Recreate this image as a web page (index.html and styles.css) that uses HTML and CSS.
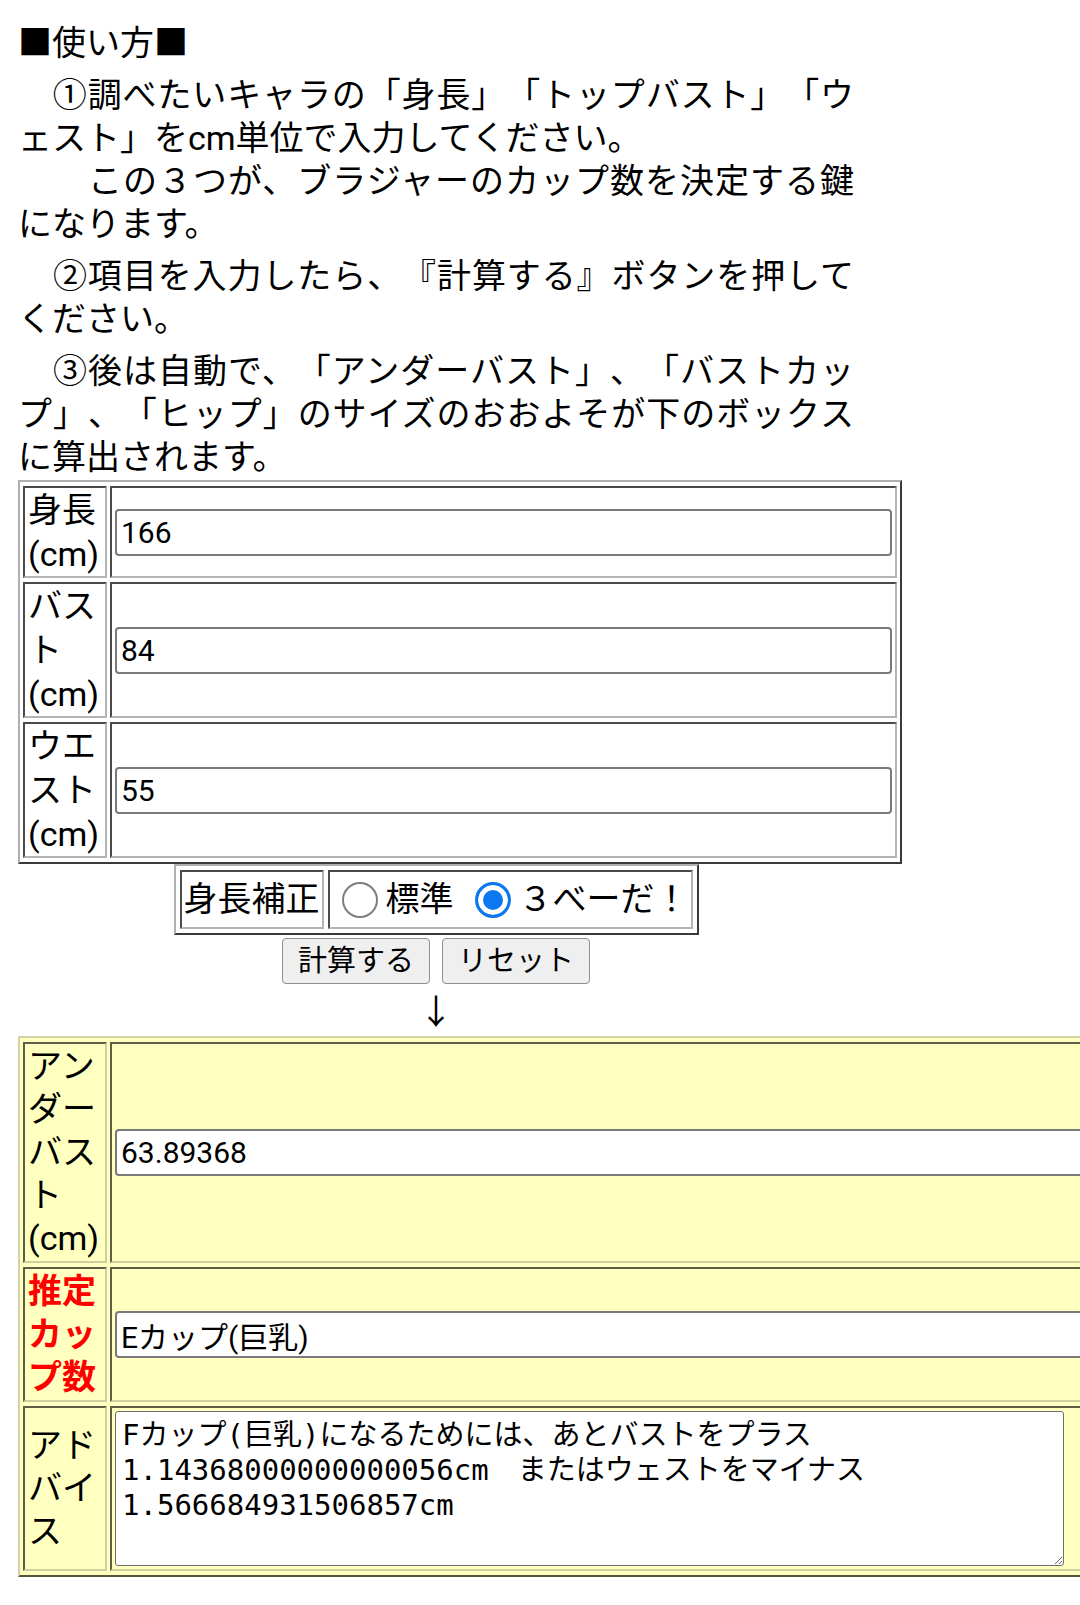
FILE: index.html
```html
<!DOCTYPE html>
<html lang="ja">
<head>
  <meta charset="UTF-8" />
  <meta name="viewport" content="width=device-width, initial-scale=1.0"/>
  <title>カップ数計算機</title>
  <link rel="stylesheet" href="styles.css">
</head>

<body>
  <div class="page">
    <div class="howto">
      <div class="howto-title">■使い方■</div>
      <p>　①調べたいキャラの「身長」「トップバスト」「ウェスト」をcm単位で入力してください。<br>　　この３つが、ブラジャーのカップ数を決定する鍵になります。</p>
      <p>　②項目を入力したら、『計算する』ボタンを押してください。</p>
      <p>　③後は自動で、「アンダーバスト」、「バストカップ」、「ヒップ」のサイズのおおよそが下のボックスに算出されます。</p>
    </div>

    <form class="calc">
      <table class="input-table">
        <tr>
          <th>身長(cm)</th>
          <td><input type="text" class="field" value="166"></td>
        </tr>
        <tr>
          <th>バスト(cm)</th>
          <td><input type="text" class="field" value="84"></td>
        </tr>
        <tr>
          <th>ウエスト(cm)</th>
          <td><input type="text" class="field" value="55"></td>
        </tr>
      </table>

      <table class="mode-table">
        <tr>
          <th>身長補正</th>
          <td>
            <div class="modes">
              <label class="mode"><input type="radio" name="mode" value="0"><span>標準</span></label>
              <label class="mode"><input type="radio" name="mode" value="1" checked><span>３べーだ！</span></label>
            </div>
          </td>
        </tr>
      </table>

      <div class="buttons">
        <button type="button">計算する</button>
        <button type="reset">リセット</button>
      </div>

      <div class="arrow">↓</div>

      <table class="result-table">
        <tr>
          <th>アンダーバスト(cm)</th>
          <td><input type="text" class="field" value="63.89368" readonly></td>
        </tr>
        <tr>
          <th class="cup">推定カップ数</th>
          <td><input type="text" class="field" value="Eカップ(巨乳)" readonly></td>
        </tr>
        <tr>
          <th>アドバイス</th>
          <td><textarea class="advice" readonly>Fカップ(巨乳)になるためには、あとバストをプラス1.14368000000000056cm　またはウェストをマイナス1.566684931506857cm</textarea></td>
        </tr>
      </table>
    </form>
  </div>
</body>
</html>
```

FILE: styles.css
```css
* { box-sizing: border-box; }
body {
  margin: 0;
  font-family: Roboto, "Noto Sans CJK JP", sans-serif;
  font-size: 34px;
  line-height: 43px;
  color: #000;
  background: #fff;
  overflow-x: hidden;
  text-spacing-trim: space-all;
}
.page { width: 836px; margin-left: 18px; padding-top: 22px; }

/* how to use */
.howto p { margin: 9px 0 0; text-align: justify; }

/* tables */
table { border-style: solid; border-width: 2px; border-spacing: 3px 4px; }
th, td {
  border-style: solid; border-width: 2px;
  padding: 0 3px; vertical-align: middle;
}
th { width: 84px; font-weight: normal; text-align: left; }

.input-table, .mode-table {
  border-color: #b0b0b0 #3a3a3a #3a3a3a #b0b0b0;
}
.input-table th, .input-table td,
.mode-table th, .mode-table td {
  border-color: #4a4a4a #b4b4b4 #b4b4b4 #4a4a4a;
}
.input-table { width: 884px; margin-top: 1px; line-height: 44px; }

.field {
  display: block; width: 100%; height: 47px;
  padding: 0 4px; margin: 0;
  font-family: Roboto, "Noto Sans CJK JP", sans-serif; font-size: 30px;
  color: #000; background: #fff;
  border: 2px solid #7a7a7a; border-radius: 4px;
}

/* height correction */
.mode-table { margin: 0 auto; border-spacing: 4px; }
.mode-table th { width: auto; white-space: nowrap; padding: 6px 2px; }
.mode-table td { padding: 6px 2px; }
.modes { display: flex; align-items: center; gap: 11px; white-space: nowrap; }
.mode { display: flex; align-items: center; }
.mode input {
  appearance: none; -webkit-appearance: none;
  width: 36px; height: 36px; margin: 0 8px 0 10px;
  border: 2px solid #7d7d7d; border-radius: 50%; background: #fff;
}
.mode input:checked {
  border: 3px solid #0b78f0; background: #0b78f0;
  box-shadow: inset 0 0 0 5px #fff;
}

.buttons { display: flex; justify-content: center; gap: 12px; margin-top: 3px; }
.buttons button {
  height: 46px; padding: 0 15px;
  font-family: Roboto, "Noto Sans CJK JP", sans-serif; font-size: 29px; line-height: 36px;
  color: #000; background: #efefef;
  border: 1px solid #8f8f8f; border-radius: 4px;
  text-spacing-trim: space-all;
}
.arrow { text-align: center; margin-top: 7px; }

/* results */
.result-table {
  width: 1120px; margin-top: 2px; background: #ffffc0; line-height: 43px;
  border-color: #d2d2a4 #55553c #55553c #d2d2a4;
}
.result-table th, .result-table td {
  padding: 1px 3px;
  border-color: #5e5e46 #cfcfa0 #cfcfa0 #5e5e46;
}
.result-table th.cup { color: #f00; font-weight: bold; }
.advice {
  display: block; width: 949px; height: 155px; margin: 2px 0;
  padding: 6px 6px 3px;
  font-family: "DejaVu Sans Mono", "Noto Sans CJK JP", monospace;
  font-size: 29px; line-height: 35px;
  color: #000; background: #fff;
  border: 1px solid #6f6f6f; border-radius: 3px;
  text-spacing-trim: space-all;
}
```
